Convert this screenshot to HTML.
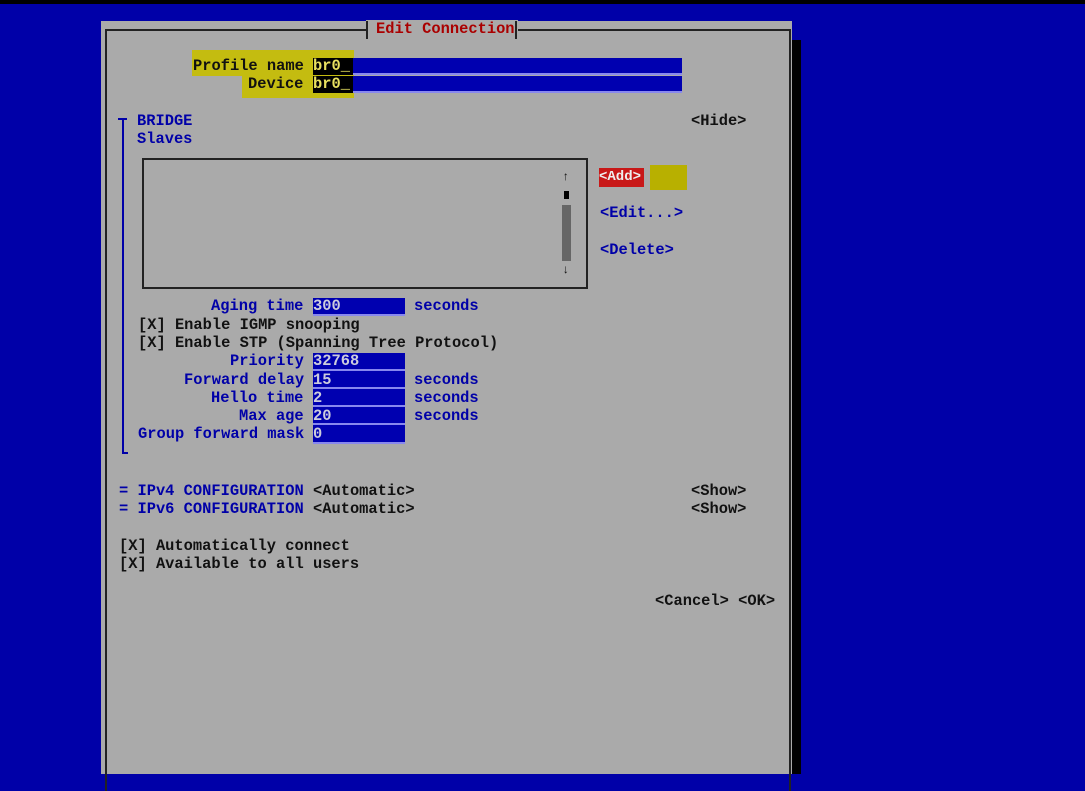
<!DOCTYPE html>
<html><head><meta charset="utf-8"><style>
html,body{margin:0;padding:0}
body{width:1085px;height:774px;background:#0000a8;position:relative;overflow:hidden;font-family:"Liberation Mono",monospace;font-weight:bold;font-size:15.4px}
.t{position:absolute;line-height:18px;height:18px;white-space:pre}
.b{color:#0000a8}.k{color:#111}.r{color:#aa0000}
.r1{position:absolute}
.fld{position:absolute;background:#0000b0;border-bottom:2px solid #8888ee;box-sizing:border-box}
</style></head><body>
<div class="r1" style="left:0;top:0;width:1085px;height:4px;background:#000"></div>
<div class="r1" style="left:792px;top:40px;width:9px;height:734px;background:#000"></div>
<div class="r1" style="left:101px;top:21px;width:691px;height:753px;background:#aaaaaa"></div>
<!-- frame -->
<div class="r1" style="left:105px;top:29px;width:682px;height:760px;border:2px solid #222;border-bottom:none"></div>
<div class="r1" style="left:366px;top:20px;width:152px;height:20px;background:#aaaaaa"></div>
<div class="r1" style="left:366px;top:21px;width:2px;height:18px;background:#222"></div>
<div class="r1" style="left:515px;top:21px;width:2px;height:18px;background:#222"></div>
<div class="t r" style="left:376px;top:20px">Edit Connection</div>
<!-- yellow highlight -->
<div class="r1" style="left:192px;top:50px;width:162px;height:26px;background:#c4bc10"></div>
<div class="r1" style="left:242px;top:74px;width:112px;height:24px;background:#c4bc10"></div>
<div class="t k" style="left:193px;top:57px">Profile name</div>
<div class="t k" style="left:248px;top:75px">Device</div>
<div class="fld" style="left:313px;top:58px;width:369px;height:17px"></div>
<div class="fld" style="left:313px;top:76px;width:369px;height:17px"></div>
<div class="r1" style="left:313px;top:58px;width:40px;height:17px;background:#000"></div>
<div class="r1" style="left:313px;top:76px;width:40px;height:17px;background:#000"></div>
<div class="t" style="left:313px;top:57px;color:#e8e060">br0_</div>
<div class="t" style="left:313px;top:75px;color:#e8e060">br0_</div>
<!-- bridge -->
<div class="r1" style="left:118px;top:118px;width:9px;height:2px;background:#0000a8"></div>
<div class="r1" style="left:122px;top:118px;width:2px;height:336px;background:#0000a8"></div>
<div class="r1" style="left:122px;top:452px;width:6px;height:2px;background:#0000a8"></div>
<div class="t b" style="left:137px;top:112px">BRIDGE</div>
<div class="t b" style="left:137px;top:130px">Slaves</div>
<div class="t k" style="left:691px;top:112px">&lt;Hide&gt;</div>
<div class="r1" style="left:142px;top:158px;width:442px;height:127px;border:2px solid #222"></div>
<div class="t k" style="left:562px;top:168px;font-size:12px">↑</div>
<div class="r1" style="left:564px;top:191px;width:5px;height:8px;background:#000"></div>
<div class="r1" style="left:562px;top:205px;width:9px;height:56px;background:#666"></div>
<div class="t k" style="left:562px;top:261px;font-size:12px">↓</div>
<div class="r1" style="left:599px;top:168px;width:45px;height:19px;background:#c81818"></div>
<div class="t" style="left:599px;top:168px;color:#eee;font-size:14px;line-height:19px">&lt;Add&gt;</div>
<div class="r1" style="left:650px;top:165px;width:37px;height:25px;background:#b8b000"></div>
<div class="t b" style="left:600px;top:204px">&lt;Edit...&gt;</div>
<div class="t b" style="left:600px;top:241px">&lt;Delete&gt;</div>
<!-- options -->
<div class="t b" style="left:211px;top:297px">Aging time</div>
<div class="t k" style="left:138px;top:316px">[X] Enable IGMP snooping</div>
<div class="t k" style="left:138px;top:334px">[X] Enable STP (Spanning Tree Protocol)</div>
<div class="t b" style="left:230px;top:352px">Priority</div>
<div class="t b" style="left:184px;top:371px">Forward delay</div>
<div class="t b" style="left:211px;top:389px">Hello time</div>
<div class="t b" style="left:239px;top:407px">Max age</div>
<div class="t b" style="left:138px;top:425px">Group forward mask</div>
<div class="fld" style="left:313px;top:298px;width:92px;height:18px"></div>
<div class="fld" style="left:313px;top:353px;width:92px;height:18px"></div>
<div class="fld" style="left:313px;top:371px;width:92px;height:18px"></div>
<div class="fld" style="left:313px;top:389px;width:92px;height:18px"></div>
<div class="fld" style="left:313px;top:407px;width:92px;height:18px"></div>
<div class="fld" style="left:313px;top:425px;width:92px;height:19px"></div>
<div class="t" style="left:313px;top:297px;color:#ccd">300</div>
<div class="t" style="left:313px;top:352px;color:#ccd">32768</div>
<div class="t" style="left:313px;top:371px;color:#ccd">15</div>
<div class="t" style="left:313px;top:389px;color:#ccd">2</div>
<div class="t" style="left:313px;top:407px;color:#ccd">20</div>
<div class="t" style="left:313px;top:425px;color:#ccd">0</div>
<div class="t b" style="left:414px;top:297px">seconds</div>
<div class="t b" style="left:414px;top:371px">seconds</div>
<div class="t b" style="left:414px;top:389px">seconds</div>
<div class="t b" style="left:414px;top:407px">seconds</div>
<!-- ip -->
<div class="t b" style="left:119px;top:482px">= IPv4 CONFIGURATION</div>
<div class="t k" style="left:313px;top:482px">&lt;Automatic&gt;</div>
<div class="t k" style="left:691px;top:482px">&lt;Show&gt;</div>
<div class="t b" style="left:119px;top:500px">= IPv6 CONFIGURATION</div>
<div class="t k" style="left:313px;top:500px">&lt;Automatic&gt;</div>
<div class="t k" style="left:691px;top:500px">&lt;Show&gt;</div>
<div class="t k" style="left:119px;top:537px">[X] Automatically connect</div>
<div class="t k" style="left:119px;top:555px">[X] Available to all users</div>
<div class="t k" style="left:655px;top:592px">&lt;Cancel&gt; &lt;OK&gt;</div>
</body></html>
